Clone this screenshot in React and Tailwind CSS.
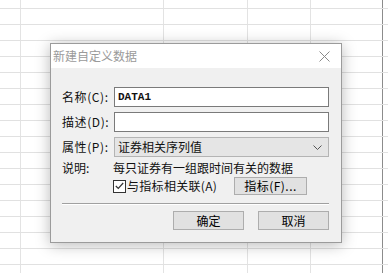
import React from 'react';

const cols = [
  'w-[21px] border-r border-[#e3e3e3]',
  'w-[143px] border-r border-[#e3e3e3]',
  'w-[84px] border-r border-[#e3e3e3]',
  'w-[63px] border-r border-[#e3e3e3]',
  'w-[72px] border-r border-[#8c8c8c]',
  'flex-1',
];

const rows = Array.from({ length: 18 }, (_, i) => i);

const font = { fontFamily: '"Noto Sans CJK SC", "Liberation Sans", sans-serif' };

const Sheet = () => (
  <div className="flex flex-col">
    {rows.map((r) => (
      <div
        key={r}
        className={`flex shrink-0 border-b border-[#e1e1e1] ${r === 0 ? 'h-[9px]' : 'h-[16px]'}`}
      >
        {cols.map((c, j) => (
          <div key={j} className={`h-full ${c}`} />
        ))}
      </div>
    ))}
  </div>
);

const Row = ({ label, children }) => (
  <div className="flex items-center h-[20px]">
    <div className="w-[52px] text-[12px] text-[#111] leading-none tracking-[0.6px]">{label}</div>
    {children}
  </div>
);

const Btn = ({ children, className = '' }) => (
  <div
    className={`flex items-center justify-center bg-[#e1e1e1] border border-[#adadad] text-[12px] text-black leading-none ${className}`}
  >
    {children}
  </div>
);

export default function App() {
  return (
    <div className="relative w-[388px] h-[273px] overflow-hidden bg-white" style={font}>
      <Sheet />

      {/* Dialog */}
      <div className="absolute left-[50px] top-[43px] w-[292px] h-[200px] border border-[#9b9b9b] bg-[#f0f0f0] shadow-[0_2px_14px_rgba(0,0,0,0.28)] flex flex-col">
        {/* Title bar */}
        <div className="h-[24px] bg-white flex items-center justify-between pl-[2px] pr-[11px] shrink-0">
          <span className="text-[12px] text-[#9a9a9a] leading-none">新建自定义数据</span>
          <svg width="11" height="11" viewBox="0 0 11 11">
            <path d="M0.5 0.5 L10.5 10.5 M10.5 0.5 L0.5 10.5" stroke="#8a8a8a" strokeWidth="1" fill="none" />
          </svg>
        </div>

        {/* Body */}
        <div className="flex flex-col pl-[11px] pr-[12px] pt-[19px]">
          <Row label="名称(C):">
            <div className="w-[215px] h-[20px] bg-white border border-[#7a7a7a] flex items-center pl-[3px]">
              <span className="text-[11px] font-bold text-[#111] leading-none" style={{ fontFamily: '"Liberation Mono", monospace' }}>
                DATA1
              </span>
            </div>
          </Row>
          <div className="mt-[5px]">
            <Row label="描述(D):">
              <div className="w-[215px] h-[20px] bg-white border border-[#7a7a7a]" />
            </Row>
          </div>
          <div className="mt-[5px]">
            <Row label="属性(P):">
              <div className="w-[215px] h-[20px] bg-[#e5e5e5] border border-[#b4b4b4] flex items-center justify-between pl-[3px] pr-[6px]">
                <span className="text-[12px] text-[#111] leading-none">证券相关序列值</span>
                <svg width="9" height="5" viewBox="0 0 9 5">
                  <path d="M0.5 0.5 L4.5 4.5 L8.5 0.5" stroke="#555" strokeWidth="1" fill="none" />
                </svg>
              </div>
            </Row>
          </div>

          {/* Description */}
          <div className="flex items-center h-[14px] mt-[4px]">
            <div className="w-[51px] text-[12px] text-[#111] leading-none">说明:</div>
            <span className="text-[12px] text-[#111] leading-none">每只证券有一组跟时间有关的数据</span>
          </div>

          {/* Checkbox row */}
          <div className="flex items-center h-[18px] mt-[2px]">
            <div className="w-[51px]" />
            <div className="w-[13px] h-[13px] bg-white border border-[#333] flex items-center justify-center">
              <svg width="9" height="8" viewBox="0 0 9 8">
                <path d="M0.8 4 L3.3 6.5 L8.2 1" stroke="#333" strokeWidth="1.2" fill="none" />
              </svg>
            </div>
            <span className="w-[107px] ml-[1px] text-[12px] text-[#111] leading-none tracking-[0.3px]">与指标相关联(A)</span>
            <Btn className="w-[73px] h-[18px] tracking-[0.5px]">指标(F)...</Btn>
          </div>

          {/* Separator */}
          <div className="mt-[8px] h-[2px] border-t border-[#a0a0a0] border-b border-b-white" />

          {/* Footer buttons */}
          <div className="flex justify-end gap-[14px] mt-[6px]">
            <Btn className="w-[71px] h-[19px]">确定</Btn>
            <Btn className="w-[71px] h-[19px]">取消</Btn>
          </div>
        </div>
      </div>
    </div>
  );
}
